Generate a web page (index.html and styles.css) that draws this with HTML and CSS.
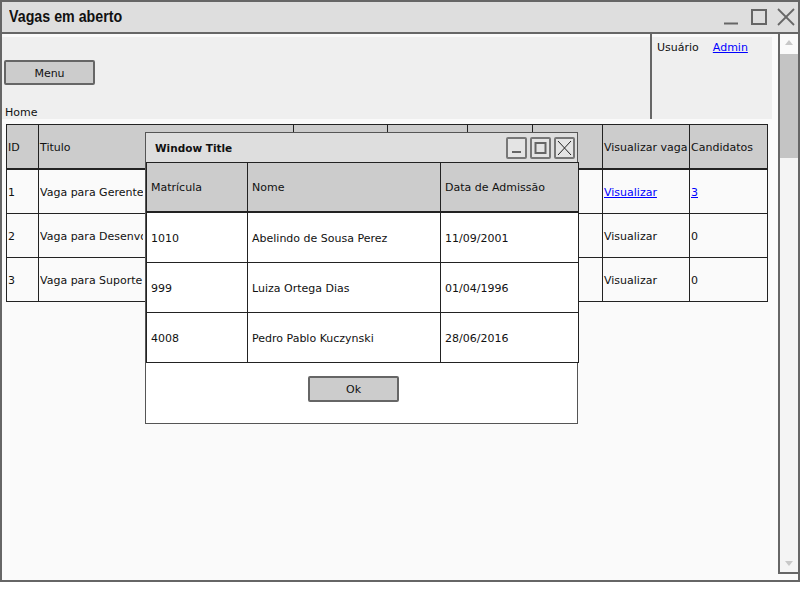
FILE: index.html
```html
<!DOCTYPE html>
<html lang="pt">
<head>
<meta charset="utf-8">
<title>Vagas em aberto</title>
<link rel="stylesheet" href="styles.css">
</head>
<body>
<div class="window">
  <div class="titlebar">
    <span class="title">Vagas em aberto</span>
    <svg class="wincontrols" width="77" height="30" viewBox="0 0 77 30">
      <line x1="3" y1="21.5" x2="17" y2="21.5" stroke="#666" stroke-width="2"/>
      <rect x="31" y="8" width="14" height="14" fill="none" stroke="#666" stroke-width="2"/>
      <line x1="57" y1="7" x2="73" y2="23" stroke="#666" stroke-width="1.8"/>
      <line x1="73" y1="7" x2="57" y2="23" stroke="#666" stroke-width="1.8"/>
    </svg>
  </div>
  <div class="content">
    <div class="main">
      <div class="toppanel">
        <div class="leftpanel">
          <div class="btn menu">Menu</div>
          <div class="home">Home</div>
        </div>
        <div class="divider"></div>
        <div class="userpanel">
          <span>Usuário</span><a href="#" class="link">Admin</a>
        </div>
      </div>
      <table class="grid">
        <colgroup>
          <col class="c1"><col class="c2"><col class="c3"><col class="c4"><col class="c5"><col class="c6"><col class="c7"><col class="c8">
        </colgroup>
        <thead>
          <tr><th>ID</th><th>Titulo</th><th></th><th></th><th></th><th></th><th>Visualizar vaga</th><th>Candidatos</th></tr>
        </thead>
        <tbody>
          <tr><td>1</td><td><span class="clip">Vaga para Gerente</span></td><td></td><td></td><td></td><td></td><td><a href="#" class="link">Visualizar</a></td><td><a href="#" class="link">3</a></td></tr>
          <tr><td>2</td><td><span class="clip">Vaga para Desenvolvedor</span></td><td></td><td></td><td></td><td></td><td>Visualizar</td><td>0</td></tr>
          <tr><td>3</td><td><span class="clip">Vaga para Suporte</span></td><td></td><td></td><td></td><td></td><td>Visualizar</td><td>0</td></tr>
        </tbody>
      </table>
    </div>
    <div class="scrollbar">
      <div class="sb-up"></div>
      <div class="sb-thumb"></div>
      <div class="sb-track"></div>
      <div class="sb-down"></div>
    </div>
  </div>
  <div class="modal">
    <div class="modal-title">
      <span>Window Title</span>
      <div class="mbuttons">
        <div class="mbtn"><svg width="17" height="18" viewBox="0 0 17 18"><line x1="4" y1="13" x2="13" y2="13" stroke="#666" stroke-width="2"/></svg></div>
        <div class="mbtn"><svg width="17" height="18" viewBox="0 0 17 18"><rect x="3.5" y="4" width="10" height="10" fill="none" stroke="#666" stroke-width="2"/></svg></div>
        <div class="mbtn"><svg width="17" height="18" viewBox="0 0 17 18"><line x1="2" y1="2" x2="15" y2="16" stroke="#222" stroke-width="1"/><line x1="15" y1="2" x2="2" y2="16" stroke="#222" stroke-width="1"/></svg></div>
      </div>
    </div>
    <table class="mgrid">
      <colgroup><col class="m1"><col class="m2"><col class="m3"></colgroup>
      <thead>
        <tr><th>Matrícula</th><th>Nome</th><th>Data de Admissão</th></tr>
      </thead>
      <tbody>
        <tr><td>1010</td><td>Abelindo de Sousa Perez</td><td>11/09/2001</td></tr>
        <tr><td>999</td><td>Luiza Ortega Dias</td><td>01/04/1996</td></tr>
        <tr><td>4008</td><td>Pedro Pablo Kuczynski</td><td>28/06/2016</td></tr>
      </tbody>
    </table>
    <div class="modal-foot">
      <div class="btn ok">Ok</div>
    </div>
  </div>
</div>
</body>
</html>
```

FILE: styles.css
```css
body {
  margin: 0;
  background: #ffffff;
  font-family: "DejaVu Sans", "Liberation Sans", sans-serif;
  font-size: 11px;
  color: #111;
}

.window {
  position: relative;
  width: 800px;
  height: 582px;
  box-sizing: border-box;
  border: 2px solid #666;
  background: #fafafa;
  display: flex;
  flex-direction: column;
}

.titlebar {
  height: 30px;
  flex: none;
  background: #dedede;
  border-bottom: 2px solid #666;
  display: flex;
  align-items: center;
  padding-left: 7px;
}

.title {
  font-family: "Liberation Sans", sans-serif;
  font-weight: bold;
  font-size: 16px;
  color: #111;
  margin-top: -1px;
  display: inline-block;
  transform: scaleX(0.89);
  transform-origin: left center;
  white-space: nowrap;
}

.wincontrols {
  margin-left: auto;
  display: block;
}

.content {
  flex: 1;
  display: flex;
  min-height: 0;
}

.main {
  flex: 1;
}

.toppanel {
  display: flex;
  width: 770px;
  height: 85px;
}

.leftpanel {
  width: 648px;
  margin-top: 3px;
  background: #efefef;
  display: flex;
  flex-direction: column;
  align-items: flex-start;
}

.divider {
  width: 2px;
  background: #666;
}

.userpanel {
  flex: 1;
  margin-top: 3px;
  background: #efefef;
  padding: 4px 0 0 5px;
  font-size: 11px;
}

.userpanel .link {
  margin-left: 14px;
}

.link {
  color: #0000ff;
  text-decoration: underline;
}

.btn {
  box-sizing: border-box;
  background: #cccccc;
  border: 2px solid #666;
  border-radius: 2px;
  display: flex;
  align-items: center;
  justify-content: center;
  font-size: 11px;
  color: #111;
}

.menu {
  width: 91px;
  height: 26px;
  margin: 23px 0 0 2px;
  padding-top: 2px;
}

.home {
  margin: 21px 0 0 3px;
}

.grid {
  border-collapse: collapse;
  margin: 5px 0 0 4px;
  width: 761px;
  table-layout: fixed;
}

.grid .c1 { width: 32px; }
.grid .c2 { width: 255px; }
.grid .c3 { width: 94px; }
.grid .c4 { width: 80px; }
.grid .c5 { width: 65px; }
.grid .c6 { width: 70px; }
.grid .c7 { width: 87px; }
.grid .c8 { width: 78px; }

.grid th,
.grid td {
  border: 1px solid #222;
  padding: 0 0 0 1px;
  text-align: left;
  font-weight: normal;
  white-space: nowrap;
  overflow: hidden;
  font-size: 11px;
}

.grid th {
  background: #cccccc;
  height: 41px;
  padding-top: 2px;
  border-bottom: 2px solid #222;
}

.grid td {
  background: #fafafa;
  height: 42px;
  padding-top: 1px;
}

.clip {
  display: block;
  width: 103px;
  overflow: hidden;
  white-space: nowrap;
}

.scrollbar {
  width: 18px;
  flex: none;
  border-left: 2px solid #666;
  border-bottom: 2px solid #666;
  margin-bottom: 6px;
  display: flex;
  flex-direction: column;
  background: #f4f4f4;
}

.sb-up {
  height: 20px;
  background: #fafafa;
  position: relative;
}

.sb-up::after {
  content: "";
  position: absolute;
  left: 5px;
  top: 6px;
  border-left: 4px solid transparent;
  border-right: 4px solid transparent;
  border-bottom: 5px solid #c8c8c8;
}

.sb-thumb {
  height: 104px;
  background: #c4c4c4;
}

.sb-track {
  flex: 1;
}

.sb-down {
  height: 16px;
  position: relative;
}

.sb-down::after {
  content: "";
  position: absolute;
  left: 5px;
  top: 5px;
  border-left: 4px solid transparent;
  border-right: 4px solid transparent;
  border-top: 5px solid #c8c8c8;
}

.modal {
  position: absolute;
  left: 143px;
  top: 130px;
  width: 433px;
  height: 292px;
  box-sizing: border-box;
  border: 1px solid #555;
  background: #ffffff;
  display: flex;
  flex-direction: column;
}

.modal-title {
  height: 29px;
  flex: none;
  background: #dedede;
  display: flex;
  align-items: center;
  padding-left: 9px;
  font-weight: bold;
  font-size: 10.5px;
}

.mbuttons {
  margin-left: auto;
  margin-right: 2px;
  display: flex;
  gap: 3px;
}

.mbtn {
  width: 21px;
  height: 22px;
  box-sizing: border-box;
  border: 2px solid #777;
  border-radius: 2px;
  background: #e4e4e4;
  display: flex;
  align-items: center;
  justify-content: center;
}

.mbtn svg {
  display: block;
}

.mgrid {
  border-collapse: collapse;
  width: 432px;
  table-layout: fixed;
}

.mgrid .m1 { width: 101px; }
.mgrid .m2 { width: 193px; }
.mgrid .m3 { width: 138px; }

.mgrid th,
.mgrid td {
  border: 1px solid #222;
  padding: 0 0 0 4px;
  text-align: left;
  font-weight: normal;
  font-size: 11px;
  white-space: nowrap;
}

.mgrid th {
  background: #cccccc;
  height: 48px;
  border-bottom: 2px solid #222;
}

.mgrid td {
  background: #ffffff;
  height: 47px;
  padding-top: 2px;
}

.modal-foot {
  flex: 1;
  padding: 13px 0 0 162px;
}

.ok {
  width: 91px;
  height: 26px;
}
```
